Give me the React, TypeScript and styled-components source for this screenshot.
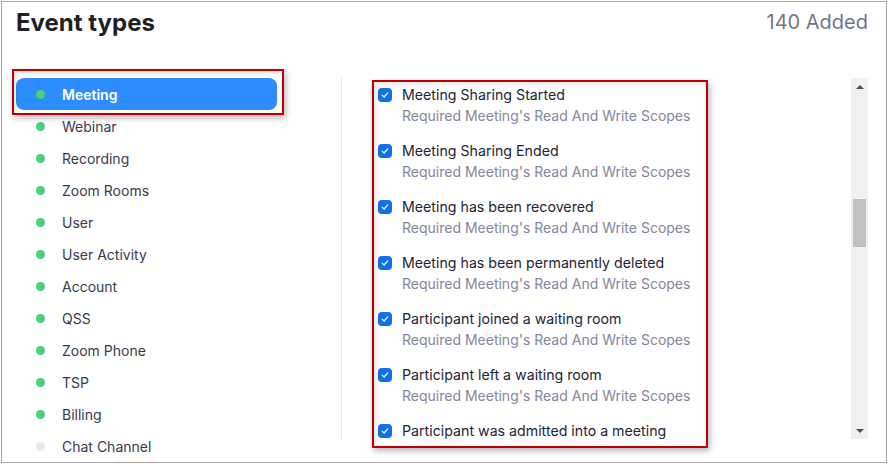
import styled, { createGlobalStyle } from "styled-components";

const categories = [
  { name: "Meeting", active: true, enabled: true },
  { name: "Webinar", enabled: true },
  { name: "Recording", enabled: true },
  { name: "Zoom Rooms", enabled: true },
  { name: "User", enabled: true },
  { name: "User Activity", enabled: true },
  { name: "Account", enabled: true },
  { name: "QSS", enabled: true },
  { name: "Zoom Phone", enabled: true },
  { name: "TSP", enabled: true },
  { name: "Billing", enabled: true },
  { name: "Chat Channel", enabled: false },
];

const events = [
  "Meeting Sharing Started",
  "Meeting Sharing Ended",
  "Meeting has been recovered",
  "Meeting has been permanently deleted",
  "Participant joined a waiting room",
  "Participant left a waiting room",
  "Participant was admitted into a meeting",
];

export default function App() {
  return (
    <>
      <GlobalStyle />
      <Frame>
        <Header>
          <Title>Event types</Title>
          <Count>140 Added</Count>
        </Header>
        <Body>
          <Sidebar>
            <CategoryList>
              {categories.map((c) => (
                <Category key={c.name} active={c.active}>
                  <Dot enabled={c.enabled} />
                  {c.name}
                </Category>
              ))}
              <Annotation style={{ left: -4, top: -9, width: 272, height: 46 }} />
            </CategoryList>
          </Sidebar>
          <Divider />
          <EventsPane>
            <Viewport>
              {events.map((e) => (
                <EventItem key={e}>
                  <EventTitle>
                    <Check>
                      <svg width="8" height="8" viewBox="0 0 8 8">
                        <polyline
                          points="1.2,4.2 3.1,6 6.8,1.8"
                          fill="none"
                          stroke="#fff"
                          strokeWidth="1.2"
                          strokeLinecap="round"
                          strokeLinejoin="round"
                        />
                      </svg>
                    </Check>
                    {e}
                  </EventTitle>
                  <EventScope>Required Meeting's Read And Write Scopes</EventScope>
                </EventItem>
              ))}
            </Viewport>
            <Scrollbar>
              <Arrow dir="up" />
              <Track>
                <Thumb />
              </Track>
              <Arrow dir="down" />
            </Scrollbar>
            <Annotation style={{ left: 30, top: 2, width: 336, height: 368 }} />
          </EventsPane>
        </Body>
      </Frame>
    </>
  );
}

const GlobalStyle = createGlobalStyle`
  body {
    margin: 0;
    background: #ffffff;
    font-family: Inter, "Noto Sans", sans-serif;
  }
`;

const Frame = styled.div`
  margin: 1px 0 0 1px;
  width: 886px;
  height: 462px;
  box-sizing: border-box;
  border: 1px solid #a5a5a5;
  overflow: hidden;
  display: flex;
  flex-direction: column;
  background: #fff;
`;

const Header = styled.div`
  height: 76px;
  display: flex;
  justify-content: space-between;
  align-items: flex-start;
  padding: 6px 18px 0 14px;
  box-sizing: border-box;
`;

const Title = styled.h1`
  margin: 0;
  font-size: 24px;
  line-height: 30px;
  font-weight: 700;
  color: #1f1f24;
`;

const Count = styled.div`
  font-size: 20px;
  line-height: 26px;
  color: #747487;
  padding-top: 1px;
`;

const Body = styled.div`
  display: flex;
  align-items: flex-start;
`;

const Sidebar = styled.div`
  width: 339px;
  padding-left: 14px;
  box-sizing: border-box;
`;

const CategoryList = styled.div`
  position: relative;
  width: 261px;
  display: flex;
  flex-direction: column;
`;

const Category = styled.div<{ active?: boolean }>`
  height: 32px;
  display: flex;
  align-items: center;
  gap: 17px;
  padding-left: 20px;
  border-radius: 8px;
  font-size: 14px;
  font-weight: ${({ active }) => (active ? 600 : 400)};
  color: ${({ active }) => (active ? "#ffffff" : "#39394d")};
  background: ${({ active }) => (active ? "#2d8cff" : "transparent")};
`;

const Dot = styled.span<{ enabled?: boolean }>`
  width: 9px;
  height: 9px;
  border-radius: 50%;
  flex: none;
  background: ${({ enabled }) => (enabled ? "#4ccf7b" : "#e9e9f0")};
`;

const Divider = styled.div`
  width: 1px;
  height: 361px;
  background: #e4e4ee;
`;

const EventsPane = styled.div`
  position: relative;
  display: flex;
`;

const Viewport = styled.div`
  width: 509px;
  height: 361px;
  overflow: hidden;
  padding: 7px 0 0 36px;
  box-sizing: border-box;
`;

const EventItem = styled.div`
  padding-bottom: 15px;
`;

const EventTitle = styled.div`
  display: flex;
  align-items: center;
  gap: 10px;
  font-size: 14.2px;
  line-height: 20px;
  color: #232333;
`;

const Check = styled.span`
  width: 14px;
  height: 14px;
  border-radius: 4px;
  background: #0e71eb;
  display: flex;
  align-items: center;
  justify-content: center;
  flex: none;
`;

const EventScope = styled.div`
  margin-top: 1px;
  padding-left: 24px;
  font-size: 14px;
  line-height: 20px;
  color: #85859b;
`;

const Scrollbar = styled.div`
  width: 17px;
  height: 361px;
  background: #f0f0f0;
  display: flex;
  flex-direction: column;
`;

const Arrow = styled.div<{ dir: "up" | "down" }>`
  height: 17px;
  flex: none;
  display: flex;
  align-items: center;
  justify-content: center;
  &::after {
    content: "";
    border-left: 4px solid transparent;
    border-right: 4px solid transparent;
    ${({ dir }) =>
      dir === "up" ? "border-bottom: 4px solid #505050;" : "border-top: 4px solid #505050;"}
  }
`;

const Track = styled.div`
  flex: 1;
  padding: 104px 2px 0 2px;
`;

const Thumb = styled.div`
  height: 48px;
  background: #c1c1c1;
`;

const Annotation = styled.div`
  position: absolute;
  box-sizing: border-box;
  border: 2px solid #c00000;
  box-shadow: 2px 3px 6px rgba(0, 0, 0, 0.28), inset 2px 2px 5px rgba(0, 0, 0, 0.12);
  pointer-events: none;
`;
